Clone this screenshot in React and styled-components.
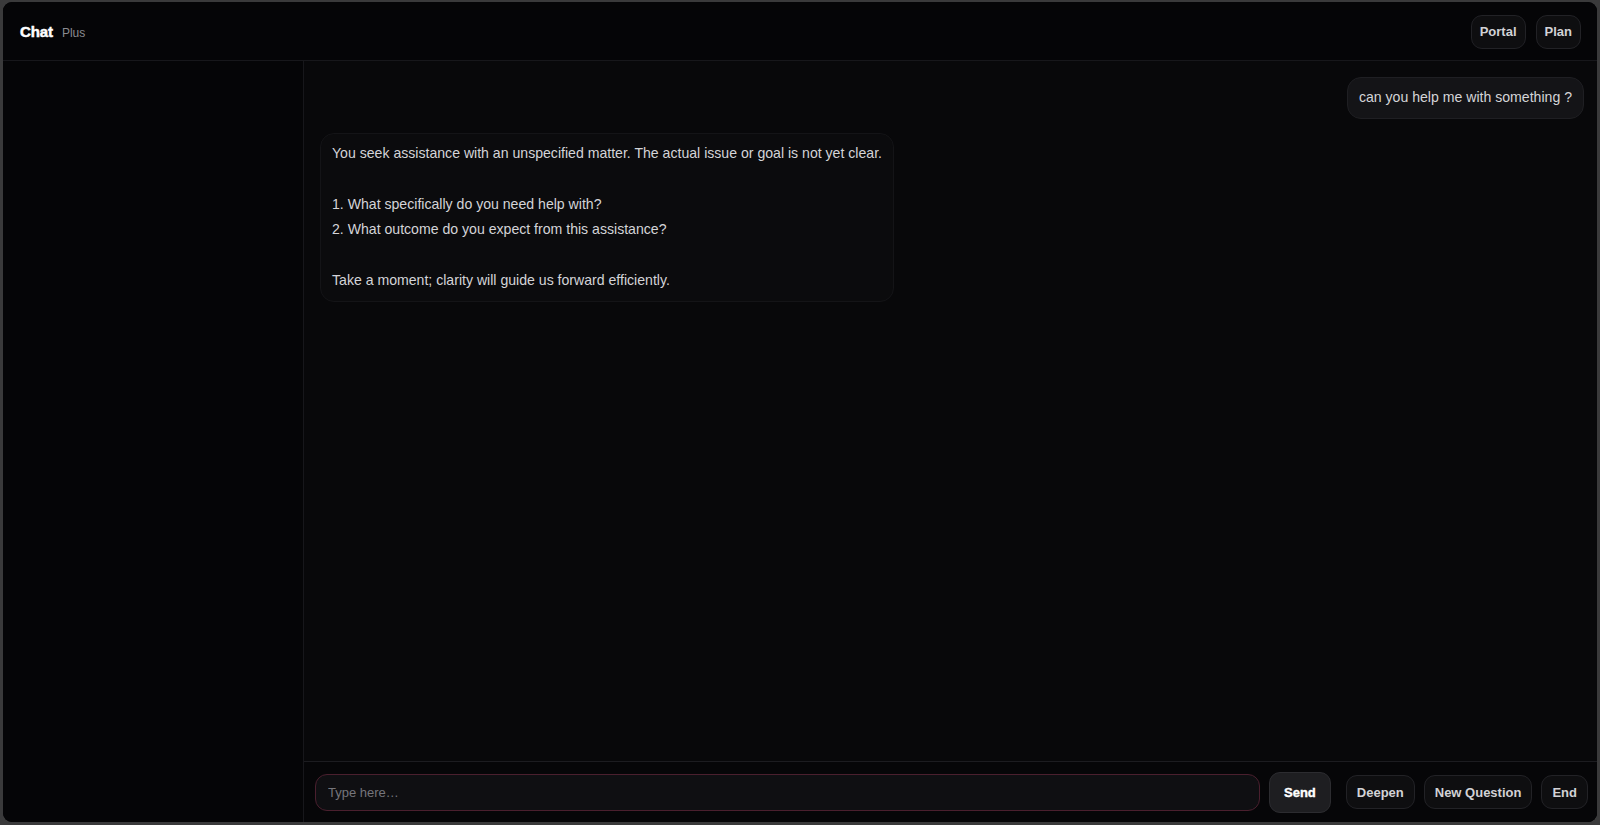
import styled, { createGlobalStyle } from "styled-components";

const Global = createGlobalStyle`
  html, body {
    margin: 0;
    height: 100%;
    background: #3a3a3b;
  }
  body {
    padding: 2px 3px 3px 3px;
    box-sizing: border-box;
    font-family: "Liberation Sans", Arial, sans-serif;
  }
  #root {
    height: 100%;
  }
  * {
    box-sizing: border-box;
  }
`;

const Shell = styled.div`
  height: 100%;
  display: grid;
  grid-template-rows: 59px 1fr;
  grid-template-columns: 301px 1fr;
  background: #050507;
  border-radius: 9px;
  overflow: hidden;
`;

const TopBar = styled.header`
  grid-column: 1 / -1;
  display: flex;
  align-items: center;
  justify-content: space-between;
  padding: 1px 16px 0 17px;
  border-bottom: 1px solid #17171b;
  background: #050507;
`;

const Brand = styled.div`
  display: flex;
  align-items: baseline;
  gap: 9px;
`;

const BrandName = styled.span`
  color: #fff;
  font-size: 15px;
  font-weight: 700;
  -webkit-text-stroke: 0.5px #fff;
  letter-spacing: -0.1px;
`;

const BrandTier = styled.span`
  color: #8b8b90;
  font-size: 12px;
`;

const NavGroup = styled.nav`
  display: flex;
  gap: 10px;
`;

const Pill = styled.button`
  height: ${(p) => (p.$big ? "41px" : "34px")};
  padding: 0 ${(p) => (p.$big ? "14px" : p.$tight ? "8px" : "10px")};
  border-radius: 11px;
  background: ${(p) => (p.$big ? "#1e1e21" : "#0e0e10")};
  border: 1px solid ${(p) => (p.$big ? "#2c2c30" : "#222226")};
  color: ${(p) => (p.$big ? "#fff" : "#d2d2d6")};
  font-family: "Liberation Sans", Arial, sans-serif;
  font-size: 13px;
  font-weight: 700;
  -webkit-text-stroke: ${(p) => (p.$big ? "0.4px #fff" : "0")};
  cursor: pointer;
`;

const Sidebar = styled.aside`
  background: #050507;
  border-right: 1px solid #17171b;
`;

const Main = styled.main`
  display: flex;
  flex-direction: column;
  background: #08080a;
  min-height: 0;
`;

const Thread = styled.div`
  flex: 1;
  display: flex;
  flex-direction: column;
  gap: 14px;
  padding: 16px 13px 16px 16px;
  overflow: auto;
`;

const Bubble = styled.div`
  align-self: ${(p) => (p.$mine ? "flex-end" : "flex-start")};
  max-width: 60%;
  padding: 7px 11px 8px;
  border-radius: 14px;
  background: ${(p) => (p.$mine ? "#141417" : "#0b0b0d")};
  border: 1px solid ${(p) => (p.$mine ? "#1f1f23" : "#141417")};
  color: #d4d4d8;
  font-size: 14.1px;
  line-height: 25.3px;
  white-space: pre-wrap;
`;

const Composer = styled.div`
  display: flex;
  align-items: center;
  gap: 9px;
  height: 61px;
  padding: 0 9px 0 11px;
  border-top: 1px solid #1c1c20;
  background: #060608;
`;

const Field = styled.input`
  flex: 1;
  height: 37px;
  padding: 0 12px;
  border-radius: 12px;
  background: #0f0f12;
  border: 1px solid #4a1f2e;
  color: #ddd;
  font-family: "Liberation Sans", Arial, sans-serif;
  font-size: 13px;
  outline: none;
  &::placeholder {
    color: #75757b;
  }
`;

const Actions = styled.div`
  display: flex;
  gap: 9px;
  margin-left: 6px;
`;

const reply = `You seek assistance with an unspecified matter. The actual issue or goal is not yet clear.

1. What specifically do you need help with?
2. What outcome do you expect from this assistance?

Take a moment; clarity will guide us forward efficiently.`;

export default function App() {
  return (
    <>
      <Global />
      <Shell>
        <TopBar>
          <Brand>
            <BrandName>Chat</BrandName>
            <BrandTier>Plus</BrandTier>
          </Brand>
          <NavGroup>
            <Pill $tight>Portal</Pill>
            <Pill $tight>Plan</Pill>
          </NavGroup>
        </TopBar>
        <Sidebar />
        <Main>
          <Thread>
            <Bubble $mine>can you help me with something ?</Bubble>
            <Bubble>{reply}</Bubble>
          </Thread>
          <Composer>
            <Field placeholder="Type here…" />
            <Pill $big>Send</Pill>
            <Actions>
              <Pill>Deepen</Pill>
              <Pill>New Question</Pill>
              <Pill>End</Pill>
            </Actions>
          </Composer>
        </Main>
      </Shell>
    </>
  );
}
